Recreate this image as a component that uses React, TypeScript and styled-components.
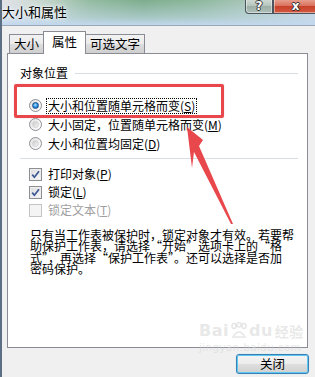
import React from "react";
import styled, { createGlobalStyle } from "styled-components";

const Global = createGlobalStyle`
  html, body { margin: 0; padding: 0; background: #f0f0f0; }
  body { width: 315px; height: 377px; overflow: hidden; }
  * { box-sizing: border-box; }
`;

const FONT = `"Noto Sans CJK SC", "DejaVu Sans", sans-serif`;

const Window = styled.div`
  position: relative;
  width: 315px;
  height: 377px;
  display: flex;
  flex-direction: column;
  border-left: 2px solid #5d6f85;
  font-family: ${FONT};
  font-size: 12px;
  color: #000;
  overflow: hidden;
`;

const TitleBar = styled.div`
  height: 25px;
  flex: none;
  display: flex;
  align-items: flex-start;
  background:
    linear-gradient(to bottom, rgba(255,255,255,0) 0%, rgba(200,220,240,0.55) 70%, #c2d8ef 100%),
    linear-gradient(90deg, #e4e2e6 0%, #c9d8cf 12%, #94bba0 28%, #7dad8c 45%, #8cb79a 62%, #a9c6b8 80%, #c2d3dc 100%);
`;

const Title = styled.div`
  margin: 4px 0 0 0;
  font-size: 13px;
  line-height: 16px;
  color: #000;
  text-shadow: 0 0 6px #fff, 0 0 3px #fff;
`;

const Spacer = styled.div`
  flex: 1;
`;

const CaptionButtons = styled.div`
  display: flex;
  margin-top: -1px;
`;

const CapButton = styled.div<{ $kind: "help" | "close" }>`
  height: 15px;
  width: ${(p) => (p.$kind === "help" ? "28px" : "45px")};
  margin-right: ${(p) => (p.$kind === "close" ? "-3px" : "0")};
  border: 1px solid #4a5560;
  border-top: none;
  border-radius: ${(p) => (p.$kind === "help" ? "0 0 0 4px" : "0 0 4px 0")};
  background: ${(p) =>
    p.$kind === "help"
      ? "linear-gradient(#d2dcd6 0%, #b4c4bc 50%, #9cafa6 51%, #aebfb8 100%)"
      : "linear-gradient(#e9a595 0%, #d9705c 50%, #c7402a 51%, #d25a3f 100%)"};
  box-shadow: inset 0 0 0 1px rgba(255,255,255,0.45);
  display: flex;
  align-items: center;
  justify-content: center;
  color: #fff;
  font-family: "DejaVu Sans", sans-serif;
  font-weight: bold;
  font-size: 12px;
  line-height: 1;
  text-shadow: 1px 0 0 #333, -1px 0 0 #333, 0 1px 0 #333, 0 -1px 0 #333;
`;

const Body = styled.div`
  flex: 1;
  background: #f0f0f0;
  border-top: 1px solid #9aa8b6;
  padding: 5px 0 0 5px;
  display: flex;
  flex-direction: column;
`;

const TabRow = styled.div`
  height: 22px;
  display: flex;
  align-items: flex-end;
  padding-left: 2px;
  position: relative;
  z-index: 2;
`;

const Tab = styled.div<{ $active?: boolean; $w: number }>`
  width: ${(p) => p.$w}px;
  height: ${(p) => (p.$active ? "23px" : "19px")};
  margin-bottom: ${(p) => (p.$active ? "-1px" : "0")};
  margin-left: -1px;
  border: 1px solid #898c95;
  border-bottom: none;
  background: ${(p) => (p.$active ? "#fff" : "linear-gradient(#f2f2f2 0%, #ebebeb 50%, #dddddd 51%, #cfcfcf 100%)")};
  display: flex;
  align-items: ${(p) => (p.$active ? "flex-start" : "center")};
  padding-top: ${(p) => (p.$active ? "2px" : "0")};
  justify-content: center;
  font-size: 12.5px;
  line-height: 16px;
  &:first-child { margin-left: 0; }
`;

const Panel = styled.div`
  width: 301px;
  height: 295px;
  border: 1px solid #898c95;
  background: #fff;
  padding: 0 9px 0 12px;
  display: flex;
  flex-direction: column;
`;

const GroupHeader = styled.div`
  margin-top: 12px;
  height: 14px;
  display: flex;
  align-items: center;
  line-height: 14px;
`;

const HeaderLine = styled.div`
  flex: 1;
  height: 1px;
  margin-left: 7px;
  background: #d5dfe5;
`;

const OptionList = styled.div<{ $top: number }>`
  margin-top: ${(p) => p.$top}px;
  display: flex;
  flex-direction: column;
  padding-left: 9px;
`;

const OptionRow = styled.div<{ $h: number; $disabled?: boolean }>`
  height: ${(p) => p.$h}px;
  display: flex;
  align-items: center;
  gap: 6px;
  line-height: 14px;
  color: ${(p) => (p.$disabled ? "#a0a0a0" : "#000")};
`;

const RadioMark = styled.span<{ $checked?: boolean }>`
  position: relative;
  flex: none;
  width: 13px;
  height: 13px;
  border-radius: 50%;
  border: 1px solid #8c8f94;
  background: linear-gradient(135deg, #e2e2e2, #ffffff);
  &::after {
    content: "";
    position: absolute;
    inset: 2px;
    border-radius: 50%;
    ${(p) =>
      p.$checked
        ? `background: radial-gradient(circle at 45% 40%, #bfeaff 0%, #3aa0ea 40%, #1a62b0 85%);
           border: 1px solid #1d4f88;`
        : `background: linear-gradient(135deg, #c9c9c9, #f5f5f5);
           border: 1px solid #d4d4d4;`}
  }
`;

const CheckMark = styled.span<{ $disabled?: boolean }>`
  flex: none;
  width: 13px;
  height: 13px;
  border: 1px solid ${(p) => (p.$disabled ? "#c4c4c4" : "#8c8f94")};
  background: ${(p) => (p.$disabled ? "#f4f4f4" : "linear-gradient(135deg, #dcdcdc, #f8f8f8)")};
  box-shadow: inset 0 0 0 1px ${(p) => (p.$disabled ? "#f4f4f4" : "#eeeeee")};
  display: flex;
  align-items: center;
  justify-content: center;
`;

const FocusLabel = styled.span`
  outline: 1px dotted #000;
  outline-offset: 0px;
  padding: 0 1px;
  margin-left: -1px;
`;

const Separator = styled.div`
  margin-top: 5px;
  height: 1px;
  background: #d5dfe5;
`;

const Note = styled.p`
  margin: 10px 0 0 10px;
  font-size: 12px;
  line-height: 11.3px;
  white-space: nowrap;
  font-feature-settings: "fwid" 1;
`;

const Footer = styled.div`
  width: 302px;
  margin-top: 6px;
  display: flex;
  justify-content: flex-end;
`;

const PushButton = styled.button`
  width: 73px;
  height: 20px;
  padding: 0;
  font-family: ${FONT};
  font-size: 12.5px;
  line-height: 16px;
  color: #000;
  border: 1px solid #3c7fb1;
  border-radius: 3px;
  box-shadow: inset 0 0 0 1px #5cc8f4, 0 0 1px #7fd0f5;
  background: linear-gradient(#f4f4f4 0%, #ececec 50%, #dedede 51%, #d0d0d0 100%);
`;

const Annotation = styled.div`
  position: absolute;
  left: 12px;
  top: 84px;
  width: 210px;
  height: 34px;
  border: 3px solid #e8474b;
  border-radius: 2px;
  box-shadow: 0 0 1px rgba(200, 50, 50, 0.5);
  pointer-events: none;
`;

const ArrowLayer = styled.svg`
  position: absolute;
  left: 0;
  top: 0;
  pointer-events: none;
`;

const Watermark = styled.div`
  position: absolute;
  left: 197px;
  top: 322px;
  display: flex;
  flex-direction: column;
  gap: 1px;
  pointer-events: none;
  color: rgba(210, 210, 210, 0.5);
  font-family: "DejaVu Sans", sans-serif;
`;

const WatermarkTop = styled.div`
  display: flex;
  align-items: flex-end;
  font-size: 16px;
  font-weight: bold;
  line-height: 18px;
  letter-spacing: 0.5px;
`;

const WatermarkCjk = styled.span`
  font-family: ${FONT};
  font-size: 14px;
  margin-left: 2px;
`;

const WatermarkSub = styled.div`
  font-size: 10.5px;
  line-height: 12px;
  letter-spacing: 0.3px;
`;

const Check = () => (
  <svg width="9" height="9" viewBox="0 0 9 9">
    <path d="M1.2 4.6 L3.4 7.2 L8 1.2" fill="none" stroke="#3b5694" strokeWidth="1.7" />
  </svg>
);

export default function App() {
  return (
    <>
      <Global />
      <Window>
        <TitleBar>
          <Title>大小和属性</Title>
          <Spacer />
          <CaptionButtons>
            <CapButton $kind="help">?</CapButton>
            <CapButton $kind="close">x</CapButton>
          </CaptionButtons>
        </TitleBar>
        <Body>
          <TabRow>
            <Tab $w={35}>大小</Tab>
            <Tab $w={43} $active>属性</Tab>
            <Tab $w={60}>可选文字</Tab>
          </TabRow>
          <Panel>
            <GroupHeader>
              对象位置
              <HeaderLine />
            </GroupHeader>
            <OptionList $top={16}>
              <OptionRow $h={19}>
                <RadioMark $checked />
                <FocusLabel>大小和位置随单元格而变(<u>S</u>)</FocusLabel>
              </OptionRow>
              <OptionRow $h={19}>
                <RadioMark />
                <span>大小固定，位置随单元格而变(<u>M</u>)</span>
              </OptionRow>
              <OptionRow $h={19}>
                <RadioMark />
                <span>大小和位置均固定(<u>D</u>)</span>
              </OptionRow>
            </OptionList>
            <Separator />
            <OptionList $top={6}>
              <OptionRow $h={18}>
                <CheckMark>
                  <Check />
                </CheckMark>
                <span>打印对象(<u>P</u>)</span>
              </OptionRow>
              <OptionRow $h={18}>
                <CheckMark>
                  <Check />
                </CheckMark>
                <span>锁定(<u>L</u>)</span>
              </OptionRow>
              <OptionRow $h={18} $disabled>
                <CheckMark $disabled />
                <span>锁定文本(<u>T</u>)</span>
              </OptionRow>
            </OptionList>
            <Note>
              只有当工作表被保护时，锁定对象才有效。若要帮
              <br />
              助保护工作表，请选择“开始”选项卡上的“格
              <br />
              式”，再选择“保护工作表”。还可以选择是否加
              <br />
              密码保护。
            </Note>
          </Panel>
          <Footer>
            <PushButton>关闭</PushButton>
          </Footer>
        </Body>
        <Annotation />
        <ArrowLayer width="315" height="377" viewBox="0 0 315 377">
          <polygon
            points="185,127 201,140 197,146 231,224 229,224 192,152 190,168"
            fill="#e8474b"
          />
        </ArrowLayer>
        <Watermark>
          <WatermarkTop>
            Bai
            <svg width="20" height="18" viewBox="0 0 20 18">
              <g fill="none" stroke="rgba(210,210,210,0.55)" strokeWidth="1.5">
                <ellipse cx="5" cy="4" rx="2" ry="2.5" />
                <ellipse cx="10" cy="2.8" rx="2" ry="2.3" />
                <ellipse cx="15" cy="4" rx="2" ry="2.5" />
                <path d="M4 15 Q10 5 16 15 Z" />
              </g>
            </svg>
            du
            <WatermarkCjk>经验</WatermarkCjk>
          </WatermarkTop>
          <WatermarkSub>jingyan.baidu.com</WatermarkSub>
        </Watermark>
      </Window>
    </>
  );
}
